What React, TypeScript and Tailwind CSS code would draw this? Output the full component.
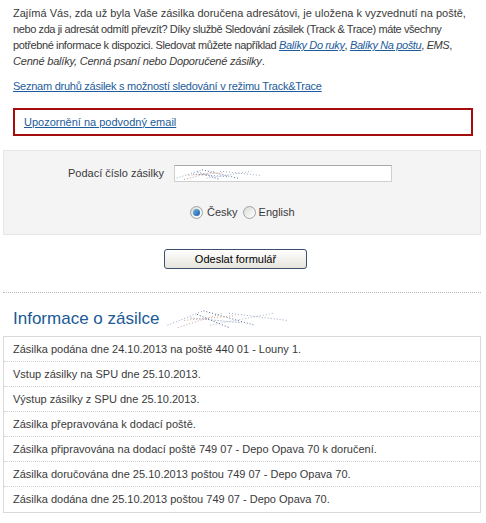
import React from 'react';

const rows = [
  'Zásilka podána dne 24.10.2013 na poště 440 01 - Louny 1.',
  'Vstup zásilky na SPU dne 25.10.2013.',
  'Výstup zásilky z SPU dne 25.10.2013.',
  'Zásilka přepravována k dodací poště.',
  'Zásilka připravována na dodací poště 749 07 - Depo Opava 70 k doručení.',
  'Zásilka doručována dne 25.10.2013 poštou 749 07 - Depo Opava 70.',
  'Zásilka dodána dne 25.10.2013 poštou 749 07 - Depo Opava 70.',
];

// rozmazaný (cenzurovaný) obrázek čísla zásilky
function Scribble({ w, h }: { w: number; h: number }) {
  const lines = [
    [0.02, 0.8, 0.3, 0.2, '#8aa4c8'],
    [0.1, 0.9, 0.45, 0.3, '#c9a0a0'],
    [0.2, 0.5, 0.6, 0.7, '#7a8fb5'],
    [0.3, 0.2, 0.7, 0.8, '#5a6f9a'],
    [0.35, 0.8, 0.85, 0.3, '#b0b8d0'],
    [0.5, 0.3, 0.95, 0.6, '#9aa8c4'],
    [0.15, 0.6, 0.55, 0.4, '#d0a890'],
    [0.25, 0.35, 0.5, 0.9, '#4a6090'],
  ] as const;
  return (
    <svg width={w} height={h} className="shrink-0">
      {lines.map(([x1, y1, x2, y2, c], i) => (
        <line
          key={i}
          x1={x1 * w}
          y1={y1 * h}
          x2={x2 * w}
          y2={y2 * h}
          stroke={c}
          strokeWidth="1"
          strokeDasharray="1 2"
        />
      ))}
    </svg>
  );
}

function Radio({ checked }: { checked?: boolean }) {
  return (
    <span className="flex h-[13px] w-[13px] items-center justify-center rounded-full border border-[#9aa3ad] bg-gradient-to-br from-[#dcdcd6] to-white">
      {checked && (
        <span className="h-[7px] w-[7px] rounded-full bg-gradient-to-br from-[#6fb3e6] to-[#1a5fa8]" />
      )}
    </span>
  );
}

export default function App() {
  const link = 'text-[#1d5c9a] underline';
  return (
    <div className="h-[523px] w-[486px] bg-white text-[11px] text-[#3a3a3a] [font-family:'Liberation_Sans',Arial,sans-serif]">
      <div className="whitespace-nowrap px-[13px] pt-[5px] leading-[16px]">
        <div>Zajímá Vás, zda už byla Vaše zásilka doručena adresátovi, je uložena k vyzvednutí na poště,</div>
        <div className="tracking-[-0.4px]">
          nebo zda ji adresát odmítl převzít? Díky službě Sledování zásilek (Track &amp; Trace) máte všechny
        </div>
        <div className="tracking-[-0.38px]">
          potřebné informace k dispozici. Sledovat můžete například{' '}
          <i className={link}>Balíky Do ruky</i>, <i className={link}>Balíky Na poštu</i>, <i>EMS</i>,
        </div>
        <div className="tracking-[-0.2px]">
          <i>Cenné balíky, Cenná psaní nebo Doporučené zásilky</i>.
        </div>
      </div>

      <div className="mt-[9px] px-[13px] leading-[16px] tracking-[-0.25px]">
        <a className={link}>Seznam druhů zásilek s možností sledování v režimu Track&amp;Trace</a>
      </div>

      <div className="mx-[13px] mt-[14px] flex h-[28px] items-center border-2 border-[#a50c0c] pl-[9px]">
        <a className={link}>Upozornění na podvodný email</a>
      </div>

      <div className="ml-[3px] mt-[14px] h-[85px] w-[478px] border border-[#e6e6e6] bg-[#f4f4f4]">
        <div className="mt-[14px] flex items-center">
          <span className="w-[160px] text-right">Podací číslo zásilky</span>
          <div className="ml-[10px] flex h-[17px] w-[218px] items-center border border-[#cfcfcf] border-t-[#a8a8a8] bg-white">
            <Scribble w={90} h={14} />
          </div>
        </div>
        <div className="mt-[22px] flex items-center">
          <span className="ml-[186px]">
            <Radio checked />
          </span>
          <span className="ml-[4px]">Česky</span>
          <span className="ml-[5px]">
            <Radio />
          </span>
          <span className="ml-[3px]">English</span>
        </div>
      </div>

      <div className="ml-[164px] mt-[14px] flex h-[20px] w-[143px] items-center justify-center rounded-[3px] border border-[#3d4f6e] bg-gradient-to-b from-white to-[#e6e4dc] text-black">
        Odeslat formulář
      </div>

      <div className="ml-[3px] mt-[23px] w-[478px] border-t border-dotted border-[#b8b8b8]" />

      <div className="mt-[9px] flex h-[32px] items-center px-[13px]">
        <h2 className="text-[17px] leading-none text-[#1a5a96]">Informace o zásilce</h2>
        <span className="ml-[6px]">
          <Scribble w={128} h={24} />
        </span>
      </div>

      <div className="ml-[3px] mt-[2px] w-[478px] border border-[#d9d9d9]">
        {rows.map((r, i) => (
          <div
            key={i}
            className={`flex h-[25px] items-center pl-[9px] ${
              i < rows.length - 1 ? 'border-b border-dotted border-[#cfcfcf]' : ''
            }`}
          >
            {r}
          </div>
        ))}
      </div>
    </div>
  );
}
